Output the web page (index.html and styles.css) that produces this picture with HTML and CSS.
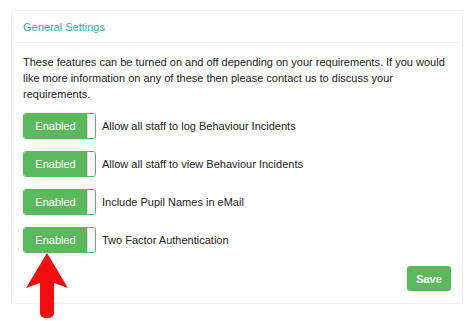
FILE: index.html
```html
<!DOCTYPE html>
<html lang="en">
<head>
  <meta charset="UTF-8" />
  <title>General Settings</title>
  <link rel="stylesheet" href="styles.css">
</head>
<body>
  <div class="panel">
    <div class="panel-heading">General Settings</div>
    <div class="panel-body">
      <p class="intro">These features can be turned on and off depending on your requirements. If you would like more information on any of these then please contact us to discuss your requirements.</p>

      <div class="setting">
        <span class="toggle"><span class="toggle-on">Enabled</span><span class="knob"></span></span>
        <span class="label">Allow all staff to log Behaviour Incidents</span>
      </div>
      <div class="setting">
        <span class="toggle"><span class="toggle-on">Enabled</span><span class="knob"></span></span>
        <span class="label">Allow all staff to view Behaviour Incidents</span>
      </div>
      <div class="setting">
        <span class="toggle"><span class="toggle-on">Enabled</span><span class="knob"></span></span>
        <span class="label">Include Pupil Names in eMail</span>
      </div>
      <div class="setting">
        <span class="toggle"><span class="toggle-on">Enabled</span><span class="knob"></span></span>
        <span class="label">Two Factor Authentication</span>
      </div>

      <div class="actions">
        <button class="btn-save">Save</button>
      </div>
    </div>
  </div>

  <svg class="arrow" width="50" height="70" viewBox="0 0 50 70">
    <path d="M27 2 L48 37 L34 32 L34 62 Q34 67 27 67 Q20 67 20 62 L20 32 L6 37 Z" fill="#f00f0f"/>
  </svg>
</body>
</html>
```

FILE: styles.css
```css
* { margin: 0; padding: 0; box-sizing: border-box; }
body {
  background: #fff;
  color: #222;
  font-family: 'Liberation Sans', Arial, sans-serif;
  font-size: 11px;
  overflow: hidden;
}
.panel {
  margin: 10px 11px 0;
  width: 452px;
  height: 294px;
  border: 1px solid #f1f1f1;
  display: flex;
  flex-direction: column;
}
.panel-heading {
  height: 32px;
  padding: 0 11px;
  display: flex;
  align-items: center;
  color: #27b3a6;
  border-bottom: 1px solid #f1f1f1;
}
.panel-body {
  padding: 11px 11px 12px;
  flex: 1;
  display: flex;
  flex-direction: column;
}
.intro {
  line-height: 16px;
  margin-bottom: 11px;
}
.setting {
  display: flex;
  align-items: center;
  gap: 6px;
  margin-bottom: 12px;
}
.toggle {
  display: flex;
  width: 73px;
  height: 26px;
  border: 1px solid #5cb85c;
  border-radius: 3px;
  overflow: hidden;
}
.toggle-on {
  width: 63px;
  background: #5cb85c;
  color: #fff;
  display: flex;
  align-items: center;
  justify-content: center;
}
.knob {
  flex: 1;
  background: #fff;
  border-left: 1px solid #ddd;
  border-radius: 0 2px 2px 0;
}
.label {
  color: #222;
}
.actions {
  margin-top: auto;
  display: flex;
  justify-content: flex-end;
}
.btn-save {
  width: 44px;
  height: 25px;
  background: #5cb85c;
  color: #fff;
  border: none;
  border-radius: 3px;
  font-family: 'Liberation Sans', Arial, sans-serif;
  font-size: 11px;
  font-weight: bold;
}
.arrow {
  position: absolute;
  left: 20px;
  top: 251px;
}
```
